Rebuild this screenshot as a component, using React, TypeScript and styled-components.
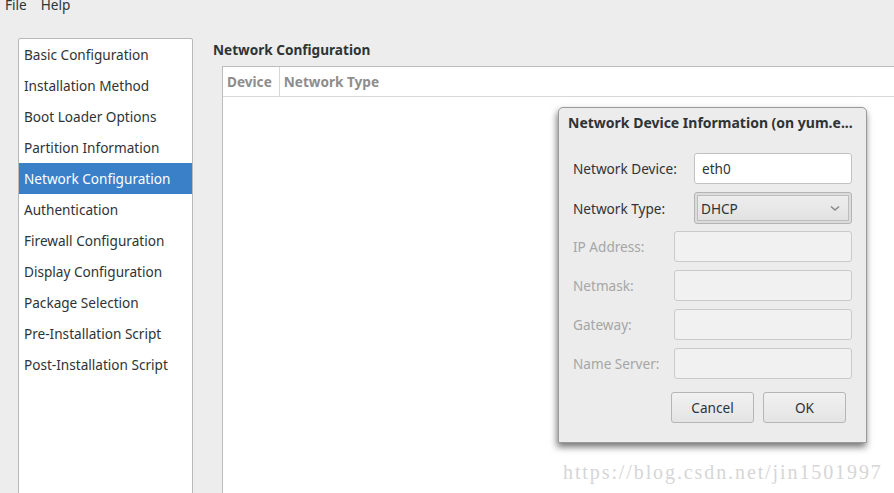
import React from 'react';
import styled, { createGlobalStyle } from 'styled-components';

const GlobalStyle = createGlobalStyle`
  html, body {
    margin: 0;
    padding: 0;
    background: #ededed;
    font-family: "Noto Sans", "Open Sans", sans-serif;
    font-size: 13.6px;
    color: #2e3436;
  }
`;

const Screen = styled.div`
  position: relative;
  width: 894px;
  height: 493px;
  overflow: hidden;
  background: #ededed;
`;

const MenuBar = styled.div`
  display: flex;
  gap: 14px;
  height: 16px;
  margin-top: -3px;
  padding-left: 5px;
  line-height: 16px;
`;

const MenuItem = styled.span`
  color: #2e3436;
`;

const Body = styled.div`
  display: grid;
  grid-template-columns: 175px 1fr;
  column-gap: 20px;
  padding: 25px 0 0 18px;
  height: 480px;
`;

const Sidebar = styled.ul`
  list-style: none;
  margin: 0;
  padding: 0;
  background: #fff;
  border: 1px solid #b8b8b8;
  border-radius: 2px 2px 0 0;
  height: 470px;
`;

const SideItem = styled.li<{ $active?: boolean }>`
  height: 31px;
  line-height: 31px;
  padding-left: 5px;
  white-space: nowrap;
  background: ${({ $active }) => ($active ? '#3a80c8' : 'transparent')};
  color: ${({ $active }) => ($active ? '#fff' : '#2e3436')};
`;

const Main = styled.div`
  display: flex;
  flex-direction: column;
`;

const Title = styled.div`
  font-weight: bold;
  height: 28px;
  line-height: 24px;
`;

const Table = styled.div`
  margin-left: 9px;
  margin-right: -20px;
  flex: 1;
  background: #fff;
  border: 1px solid #bdbdbd;
`;

const HeaderRow = styled.div`
  display: flex;
  height: 29px;
  border-bottom: 1px solid #d8d8d8;
`;

const HeaderCell = styled.div<{ $last?: boolean }>`
  padding: 0 7px 0 4px;
  line-height: 29px;
  font-weight: bold;
  color: #8d8d8d;
  border-right: ${({ $last }) => ($last ? 'none' : '1px solid #d8d8d8')};
`;

const Dialog = styled.div`
  position: absolute;
  left: 558px;
  top: 107px;
  width: 307px;
  height: 334px;
  background: #ececec;
  border: 1px solid #9a9a9a;
  border-radius: 5px 5px 0 0;
  box-shadow: -1px 4px 7px rgba(0, 0, 0, 0.55);
  display: flex;
  flex-direction: column;
`;

const DialogTitle = styled.div`
  font-weight: bold;
  font-size: 14px;
  padding: 6px 0 0 9px;
  height: 33px;
  line-height: 18px;
  white-space: nowrap;
`;

const Form = styled.div`
  display: flex;
  flex-direction: column;
  gap: 8px;
  padding: 6px 14px 0 14px;
`;

const FormRow = styled.div<{ $labelWidth: number }>`
  display: grid;
  grid-template-columns: ${({ $labelWidth }) => $labelWidth}px 1fr;
  align-items: center;
  height: 31px;
`;

const Label = styled.span<{ $disabled?: boolean }>`
  color: ${({ $disabled }) => ($disabled ? '#a6a6a6' : '#2e3436')};
  white-space: nowrap;
`;

const Entry = styled.div<{ $disabled?: boolean }>`
  box-sizing: border-box;
  height: 31px;
  padding-left: 7px;
  line-height: 29px;
  border: 1px solid ${({ $disabled }) => ($disabled ? '#cacaca' : '#c2c2c2')};
  border-radius: 3px;
  background: ${({ $disabled }) => ($disabled ? '#f1f1f1' : '#fff')};
`;

const Combo = styled.div`
  box-sizing: border-box;
  height: 32px;
  padding: 2px;
  border: 1px solid #b4b4b4;
  border-radius: 3px;
  background: #dcdcdc;
`;

const ComboInner = styled.div`
  box-sizing: border-box;
  height: 100%;
  display: flex;
  align-items: center;
  justify-content: space-between;
  padding: 0 8px 0 3px;
  border: 1px solid #bdbdbd;
  background: linear-gradient(#ededed, #e2e2e2);
`;

const Buttons = styled.div`
  display: flex;
  justify-content: flex-end;
  gap: 9px;
  padding: 13px 20px 0 0;
`;

const Button = styled.div`
  box-sizing: border-box;
  width: 83px;
  height: 31px;
  line-height: 29px;
  text-align: center;
  border: 1px solid #b6b6b6;
  border-radius: 3px;
  background: linear-gradient(#f1f1f1, #e4e4e4);
  color: #2e3436;
`;

const Watermark = styled.div`
  position: absolute;
  left: 563px;
  top: 461px;
  font-family: "Liberation Serif", serif;
  font-size: 20px;
  letter-spacing: 1.9px;
  color: #d6d6d6;
  white-space: nowrap;
`;

const sections = [
  'Basic Configuration',
  'Installation Method',
  'Boot Loader Options',
  'Partition Information',
  'Network Configuration',
  'Authentication',
  'Firewall Configuration',
  'Display Configuration',
  'Package Selection',
  'Pre-Installation Script',
  'Post-Installation Script',
];

const staticFields = ['IP Address:', 'Netmask:', 'Gateway:', 'Name Server:'];

const Chevron = () => (
  <svg width="10" height="7" viewBox="0 0 10 7">
    <path d="M1 1.5 L5 5 L9 1.5" fill="none" stroke="#8a8a8a" strokeWidth="1.6" />
  </svg>
);

export default function App() {
  return (
    <Screen>
      <GlobalStyle />
      <MenuBar>
        <MenuItem>File</MenuItem>
        <MenuItem>Help</MenuItem>
      </MenuBar>
      <Body>
        <Sidebar>
          {sections.map(name => (
            <SideItem key={name} $active={name === 'Network Configuration'}>
              {name}
            </SideItem>
          ))}
        </Sidebar>
        <Main>
          <Title>Network Configuration</Title>
          <Table>
            <HeaderRow>
              <HeaderCell>Device</HeaderCell>
              <HeaderCell $last>Network Type</HeaderCell>
            </HeaderRow>
          </Table>
        </Main>
      </Body>

      <Dialog>
        <DialogTitle>Network Device Information (on yum.e...</DialogTitle>
        <Form>
          <FormRow $labelWidth={121}>
            <Label>Network Device:</Label>
            <Entry>eth0</Entry>
          </FormRow>
          <FormRow $labelWidth={121}>
            <Label>Network Type:</Label>
            <Combo>
              <ComboInner>
                <span>DHCP</span>
                <Chevron />
              </ComboInner>
            </Combo>
          </FormRow>
          {staticFields.map(label => (
            <FormRow key={label} $labelWidth={101}>
              <Label $disabled>{label}</Label>
              <Entry $disabled />
            </FormRow>
          ))}
        </Form>
        <Buttons>
          <Button>Cancel</Button>
          <Button>OK</Button>
        </Buttons>
      </Dialog>

      <Watermark>https://blog.csdn.net/jin1501997</Watermark>
    </Screen>
  );
}
